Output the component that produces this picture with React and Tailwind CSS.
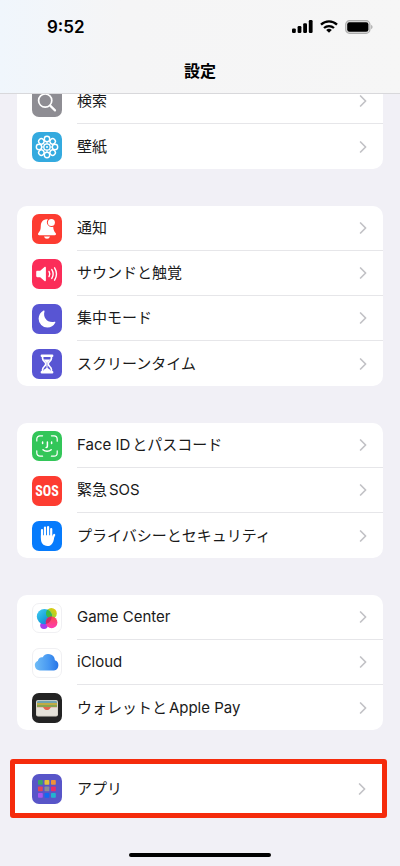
/**
 * SettingsScreen
 *
 * iOS style settings list, scrolled to the end:
 * - Status bar and translucent title bar
 * - Grouped rows with an app icon, a label and a chevron
 * - Framed "apps" row and home indicator
 */

// ── Status bar ───────────────────────────────────────────────────

const SignalIcon = () => (
  <svg width="21" height="13" viewBox="0 0 21 13" aria-hidden="true">
    <rect x="0" y="8.4" width="3.8" height="4.6" rx="1.2" />
    <rect x="5.6" y="6" width="3.8" height="7" rx="1.2" />
    <rect x="11.2" y="3.2" width="3.8" height="9.8" rx="1.2" />
    <rect x="16.8" y="0" width="3.8" height="13" rx="1.2" />
  </svg>
);

const WifiIcon = () => (
  <svg width="18" height="13" viewBox="0 0 18 13" fill="none" stroke="#000" strokeWidth="2.3" aria-hidden="true">
    <path d="M1 4.6a11.6 11.6 0 0 1 16 0" />
    <path d="M4 8a7.4 7.4 0 0 1 10 0" />
    <path d="M9 12.8 6.2 10a4.1 4.1 0 0 1 5.6 0z" fill="#000" stroke="none" />
  </svg>
);

const BatteryIcon = () => (
  <svg width="28" height="14" viewBox="0 0 28 14" aria-hidden="true">
    <rect x="0.7" y="0.7" width="24.2" height="12.6" rx="3.8" fill="#e2e2e2" stroke="#adadad" strokeWidth="1.2" />
    <rect x="2.2" y="2.2" width="21.2" height="9.6" rx="2.2" />
    <path d="M26.2 4.8c1.8.8 1.8 3.6 0 4.4z" fill="#a9a9a9" />
  </svg>
);

// ── Row icons ────────────────────────────────────────────────────

const SearchIcon = () => (
  <svg viewBox="0 0 30 30" fill="none" stroke="#fff" strokeLinecap="round" aria-hidden="true">
    <circle cx="13.2" cy="13.6" r="6.6" strokeWidth="1.7" />
    <path d="m18.2 18.6 4.8 4.8" strokeWidth="2.2" />
  </svg>
);

const WallpaperIcon = () => (
  <svg viewBox="0 0 30 30" fill="none" stroke="#fff" strokeWidth="1.4" aria-hidden="true">
    {[0, 45, 90, 135, 180, 225, 270, 315].map(angle => (
      <g key={angle} transform={`rotate(${angle} 15 15)`}>
        <circle cx="15" cy="7" r="2.7" />
        <path d="M15 9.8v2.6" strokeWidth="1.1" />
      </g>
    ))}
    <circle cx="15" cy="15" r="3.2" strokeWidth="1.2" />
    <circle cx="15" cy="15" r="1" fill="#fff" stroke="none" />
  </svg>
);

const BellIcon = () => (
  <svg viewBox="0 0 30 30" fill="#fff" aria-hidden="true">
    <path d="M14.6 5.2c-4 .3-5.8 3.3-5.8 6.6 0 3.9-.8 5.4-2.4 7.2-.8.9-.4 2.2.9 2.2h15.4c1.3 0 1.7-1.300.9-2.200-1.300-1.500-2.200-2.900-2.400-6.300a4.700 4.700 0 0 1-5.200-7.400z" />
    <circle cx="19.4" cy="8.6" r="3.500" />
    <path d="M12 22.400h6a3.100 3.100 0 0 1-6 0z" />
  </svg>
);

const SoundIcon = () => (
  <svg viewBox="0 0 30 30" fill="none" stroke="#fff" strokeLinecap="round" aria-hidden="true">
    <path d="M4.2 13c0-.8.4-1.2 1.2-1.2h2.800l4.300-3.700c.7-.6 1.400-.3 1.400.6v12.600c0 .9-.7 1.200-1.400.6l-4.300-3.700H5.400c-.8 0-1.200-.4-1.200-1.200z" fill="#fff" stroke="none" />
    <path d="M17 12.400a5 5 0 0 1 0 5.200" strokeWidth="1.4" />
    <path d="M19.800 10.600a8.400 8.400 0 0 1 0 8.800" strokeWidth="1.4" />
    <path d="M22.600 8.800a12 12 0 0 1 0 12.400" strokeWidth="1.4" />
  </svg>
);

const MoonIcon = () => (
  <svg viewBox="0 0 30 30" fill="#fff" aria-hidden="true">
    <path d="M11.600 6.600c.6-.3 1.100.1.900.8-1.900 6.200 3.100 11.800 9.900 10.300.8-.2 1.200.4.8 1A9 9 0 0 1 15.400 23.600 8.900 8.900 0 0 1 6.600 14.800c0-3.600 2-6.600 5-8.200z" />
  </svg>
);

const HourglassIcon = () => (
  <svg viewBox="0 0 30 30" aria-hidden="true">
    <path d="M10.600 7v2.600c0 2.400 3.200 3.300 3.200 5.400s-3.200 3-3.200 5.400V23h8.800v-2.600c0-2.400-3.200-3.300-3.200-5.400s3.200-3 3.200-5.400V7z" fill="none" stroke="#fff" strokeWidth="1.7" />
    <path d="M9.800 6.800h10.400M9.800 23.200h10.400" stroke="#fff" strokeWidth="2.400" strokeLinecap="round" />
    <path d="M11.600 10.400h6.800L15 14.600zM11 22.400c.3-2 2.400-2.400 4-4 1.600 1.600 3.700 2 4 4zM14.500 14h1v5h-1z" fill="#fff" />
  </svg>
);

const FaceIdIcon = () => (
  <svg viewBox="0 0 30 30" fill="none" stroke="#fff" strokeWidth="1.2" strokeLinecap="round" aria-hidden="true">
    <path d="M4.800 10V8a3.200 3.200 0 0 1 3.200-3.200h2.600M19.400 4.800H22A3.200 3.200 0 0 1 25.200 8v2.200M25.200 19.800V22a3.200 3.200 0 0 1-3.200 3.200h-2.600M10.600 25.200H8A3.200 3.200 0 0 1 4.800 22v-2.200" />
    <path d="M10.600 11v1.600M19.600 11v1.600M15.400 11v4.200c0 .9-.4 1.200-1.300 1.200M11 18.800c2.200 2 6 2 8.200 0" strokeWidth="1.5" />
  </svg>
);

const HandIcon = () => (
  <svg viewBox="0 0 30 30" fill="none" stroke="#fff" strokeLinecap="round" strokeLinejoin="round" aria-hidden="true">
    <path d="M10 9.200v8M13 6.600v9M16.100 6v9M19.200 8v9" strokeWidth="2.200" />
    <path d="m22.200 14-2.200 4" strokeWidth="2.200" />
    <path d="M8.900 14.200h11.400v3.600l2-2.400c-.5 4.800-1.800 9.600-6.800 9.600-4.500 0-6.600-3.200-6.600-7.400z" fill="#fff" stroke="none" />
  </svg>
);

const GameCenterIcon = () => (
  <svg viewBox="0 0 30 30" className="size-[30px] shrink-0" aria-hidden="true">
    <defs>
      <linearGradient id="gc-yellow" x1="0" y1="1" x2="1" y2="0">
        <stop offset="0.3" stopColor="#86d83c" />
        <stop offset="1" stopColor="#ffc400" />
      </linearGradient>
      <linearGradient id="gc-blue" x1="0" y1="0" x2="1" y2="1">
        <stop offset="0" stopColor="#45cdf6" />
        <stop offset="0.5" stopColor="#1da8dc" />
        <stop offset="1" stopColor="#1a62e8" />
      </linearGradient>
      <linearGradient id="gc-pink" x1="0" y1="0" x2="0" y2="1">
        <stop offset="0" stopColor="#fb4a50" />
        <stop offset="1" stopColor="#ff3ab4" />
      </linearGradient>
    </defs>
    <circle cx="19.400" cy="10.400" r="5.400" fill="url(#gc-yellow)" />
    <circle cx="12" cy="22.200" r="3.800" fill="#a53df0" />
    <circle cx="12.400" cy="13.600" r="7.600" fill="url(#gc-blue)" />
    <path d="M14.500 8.200a5.400 5.400 0 0 0 5.200 7.600 7.600 7.600 0 0 0-4.200-9.100q-.8.700-1 1.500z" fill="#3cba45" />
    <circle cx="19.600" cy="19.400" r="5.800" fill="url(#gc-pink)" />
    <path d="M13.900 21a5.800 5.800 0 0 1 5.800-7.400 7.600 7.600 0 0 1-5.800 7.400z" fill="#cf2a6b" />
  </svg>
);

const CloudIcon = () => (
  <svg viewBox="0 0 30 30" className="size-[30px] shrink-0" aria-hidden="true">
    <defs>
      <linearGradient id="cloud" x1="0" y1="0" x2="1" y2="0">
        <stop offset="0" stopColor="#6fbcf6" />
        <stop offset="0.6" stopColor="#4697f2" />
        <stop offset="1" stopColor="#2674e6" />
      </linearGradient>
    </defs>
    <path d="M7.800 22.400a5 5 0 0 1-1.900-9.600 4 4 0 0 1 4.800-3.500 6.600 6.600 0 0 1 12.200 2.900A5.300 5.300 0 0 1 22 22.400z" fill="url(#cloud)" />
  </svg>
);

const WalletIcon = () => (
  <svg viewBox="0 0 30 30" aria-hidden="true">
    <rect x="4" y="7" width="22" height="16.400" rx="2" fill="#d8d5cc" />
    <path d="M5 9.400a1.600 1.600 0 0 1 1.600-1.600h16.800A1.600 1.600 0 0 1 25 9.400V11H5z" fill="#6fa3b0" />
    <path d="M5 10h20v2.600H5z" fill="#c0ab45" />
    <path d="M5 12h20v2.400H5z" fill="#86a350" />
    <path d="M5 14h20v3H5z" fill="#e2654f" />
    <path d="M5 14.200h5.200c1 0 1.300.5 1.800 1.200 1.500 2.200 4.500 2.200 6 0 .5-.7.800-1.200 1.800-1.200H25v6.600a1.600 1.600 0 0 1-1.600 1.600H6.600A1.600 1.600 0 0 1 5 20.800z" fill="#e5e2da" />
  </svg>
);

const APP_TILES = [
  '#38a66b', '#e5c13a', '#ee9139',
  '#e2445c', '#8c8c96', '#e62e6b',
  '#a855f0', '#1268f0', '#22b5cf',
];

const AppsIcon = () => (
  <svg viewBox="0 0 30 30" aria-hidden="true">
    {APP_TILES.map((color, i) => (
      <rect key={color} x={6 + (i % 3) * 6.5} y={6 + Math.floor(i / 3) * 6.5} width="4.800" height="4.800" rx="0.8" fill={color} />
    ))}
  </svg>
);

const SosIcon = () => (
  <span className="font-['Liberation_Sans_Narrow','Roboto_Condensed','Liberation_Sans',sans-serif] text-sm font-bold leading-none text-white">
    SOS
  </span>
);

const ChevronIcon = () => (
  <svg width="8" height="12" viewBox="0 0 8 12" fill="none" stroke="#c2c2c6" strokeWidth="1.7" strokeLinecap="round" strokeLinejoin="round" aria-hidden="true">
    <path d="M1.600 1 6.600 6l-5 5" />
  </svg>
);

// ── Data ─────────────────────────────────────────────────────────

const GROUPS = [
  [
    { label: '検索', Icon: SearchIcon, tile: 'bg-[#8e8d93]' },
    { label: '壁紙', Icon: WallpaperIcon, tile: 'bg-[#34aadf]' },
  ],
  [
    { label: '通知', Icon: BellIcon, tile: 'bg-[#fd3c31]' },
    { label: 'サウンドと触覚', Icon: SoundIcon, tile: 'bg-[#fb2d59]' },
    { label: '集中モード', Icon: MoonIcon, tile: 'bg-[#5855d3]' },
    { label: 'スクリーンタイム', Icon: HourglassIcon, tile: 'bg-[#5855d3]' },
  ],
  [
    { label: 'Face IDとパスコード', Icon: FaceIdIcon, tile: 'bg-[#33c659]' },
    { label: '緊急SOS', Icon: SosIcon, tile: 'bg-[#fd3c31]' },
    { label: 'プライバシーとセキュリティ', Icon: HandIcon, tile: 'bg-[#067bfc]' },
  ],
  [
    { label: 'Game Center', Icon: GameCenterIcon, tile: 'bg-white border border-[#f0f0f3]' },
    { label: 'iCloud', Icon: CloudIcon, tile: 'bg-white border border-[#f0f0f3]' },
    { label: 'ウォレットとApple Pay', Icon: WalletIcon, tile: 'bg-[#232323]' },
  ],
];

// ── Rows ─────────────────────────────────────────────────────────

const SettingsRow = ({ label, Icon, tile, divided }) => (
  <a href="#" className="flex h-[45px] items-center gap-[15px] pl-[15px]">
    <span className={`flex size-[30px] shrink-0 items-center justify-center overflow-hidden rounded-[7px] ${tile}`}>
      <Icon />
    </span>
    <span className={`flex h-full flex-1 items-center justify-between pr-4 ${divided ? 'border-b border-[#e6e6e9]' : ''}`}>
      <span className="text-[15px] leading-5 [text-autospace:normal]">{label}</span>
      <ChevronIcon />
    </span>
  </a>
);

// ── Page ─────────────────────────────────────────────────────────

export default function App() {
  return (
    <div className="flex min-h-screen flex-col bg-[#f1f0f6] font-['Inter','Noto_Sans_CJK_JP',sans-serif] text-[#1a1a1a]">
      <header className="z-10 border-b border-[#d8d8db] bg-linear-to-r from-[#f0f6fc] via-[#f5f5f6] via-30% to-[#f6f6f6] text-black">
        <div className="flex h-[53px] items-center justify-between pl-[47px] pr-[27px]">
          <span className="text-[17px] font-semibold leading-5">9:52</span>
          <div className="flex items-center gap-[7px]">
            <SignalIcon />
            <WifiIcon />
            <BatteryIcon />
          </div>
        </div>
        <h1 className="flex h-10 items-start justify-center pt-2 text-base font-bold leading-5">設定</h1>
      </header>

      <main className="-mt-[15px] flex flex-1 flex-col">
        <div className="flex flex-col gap-[37px] px-[17px]">
          {GROUPS.map(rows => (
            <section key={rows[0].label} className="rounded-[10px] bg-white">
              {rows.map((row, i) => (
                <SettingsRow key={row.label} {...row} divided={i < rows.length - 1} />
              ))}
            </section>
          ))}
        </div>

        {/* Framed row */}
        <section className="mt-[29px] pl-[10px] pr-[13px]">
          <div className="rounded-[3px] border-[5px] border-[#f52b0c] bg-white py-[2px] pl-[2px]">
            <SettingsRow label="アプリ" Icon={AppsIcon} tile="bg-[#5855c8]" />
          </div>
        </section>
      </main>

      <div className="flex justify-center pb-[9px]">
        <div className="h-1 w-[142px] rounded-full bg-black" />
      </div>
    </div>
  );
}
